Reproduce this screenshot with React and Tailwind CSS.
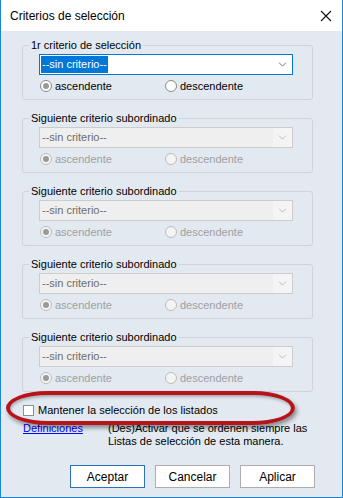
import { ChevronDown } from "lucide-react";

const font = { fontFamily: '"Liberation Sans", Arial, sans-serif' };

const Radio = ({ checked, disabled, label }) => (
  <label className="flex items-center gap-[3px]">
    <span
      className={`flex h-[12px] w-[12px] items-center justify-center rounded-full border ${
        disabled ? "border-[#bcbcbc] bg-[#f4f4f4]" : "border-[#8a8a8a] bg-white"
      } ${checked ? "bg-[#e6e6e6]" : ""}`}
    >
      {checked && <span className="h-[6px] w-[6px] rounded-full bg-[#9a9a9a]" />}
    </span>
    <span className={disabled ? "text-[#a0a0a0]" : "text-black"}>{label}</span>
  </label>
);

const Combo = ({ active }) => (
  <div
    className={`flex h-[21px] w-[254px] items-center justify-between border ${
      active ? "border-[#0078d7] bg-white" : "border-[#cccccc] bg-[#efefef]"
    }`}
  >
    <span
      className={`ml-[1px] px-[1px] leading-[17px] ${
        active ? "bg-[#0078d7] text-white" : "text-[#6d6d6d]"
      }`}
    >
      --sin criterio--
    </span>
    <span
      className={`flex h-full w-[19px] items-center justify-center ${
        active ? "" : "bg-[#f4f4f4]"
      }`}
    >
      <ChevronDown
        size={13}
        strokeWidth={1.3}
        className={active ? "text-[#404040]" : "text-[#a8a8a8]"}
      />
    </span>
  </div>
);

const Group = ({ title, active }) => (
  <fieldset className="h-[61px] w-[291px] rounded-[3px] border border-[#d0d4da] px-0 pb-[5px]">
    <legend className="ml-[6px] px-[2px] leading-[13px]">{title}</legend>
    <div className="ml-[16px] mt-[2px] flex flex-col">
      <Combo active={active} />
      <div className="mt-[3px] flex items-center pl-[1px]">
        <div className="w-[125px]">
          <Radio checked disabled={!active} label="ascendente" />
        </div>
        <Radio disabled={!active} label="descendente" />
      </div>
    </div>
  </fieldset>
);

export default function App() {
  return (
    <div
      style={font}
      className="flex h-[498px] w-[343px] flex-col border border-t-0 border-[#1a84d8] bg-[#e3e9f1] text-[11px] text-black"
    >
      <div className="flex h-[31px] shrink-0 items-center justify-between bg-white pl-[9px] pr-[9px]">
        <span className="text-[12px]">Criterios de selección</span>
        <svg width="12" height="12" viewBox="0 0 12 12" className="mr-[1px]">
          <path d="M1 1 L11 11 M11 1 L1 11" stroke="#111" strokeWidth="1.1" />
        </svg>
      </div>

      <div className="flex flex-col gap-[12px] pl-[21px] pt-[8px]">
        <Group title="1r criterio de selección" active />
        <Group title="Siguiente criterio subordinado" />
        <Group title="Siguiente criterio subordinado" />
        <Group title="Siguiente criterio subordinado" />
        <Group title="Siguiente criterio subordinado" />
      </div>

      <div className="relative mt-[10px] flex h-[16px] items-center gap-[4px] pl-[22px]">
        <span className="h-[11px] w-[11px] border border-[#8f8f8f] bg-white" />
        <span>Mantener la selección de los listados</span>
        <div className="pointer-events-none absolute left-[5px] top-[-11px] h-[34px] w-[289px] rounded-[42px/17px] border-[4px] border-[#b5141a] shadow-[2px_3px_4px_rgba(0,0,0,0.4),inset_1px_2px_3px_rgba(0,0,0,0.25)]" />
      </div>

      <div className="mt-[4px] flex pl-[22px]">
        <a className="w-[85px] text-[#0000ff] underline leading-[13px]">Definiciones</a>
        <p className="leading-[13px]">
          (Des)Activar que se ordenen siempre las
          <br />
          Listas de selección de esta manera.
        </p>
      </div>

      <div className="mt-[17px] flex gap-[10px] pl-[69px]">
        <button className="h-[23px] w-[75px] border border-[#2f6fbf] bg-white text-[12px]">
          Aceptar
        </button>
        <button className="h-[23px] w-[75px] border border-[#adadad] bg-white text-[12px]">
          Cancelar
        </button>
        <button className="h-[23px] w-[75px] border border-[#adadad] bg-white text-[12px]">
          Aplicar
        </button>
      </div>
    </div>
  );
}
